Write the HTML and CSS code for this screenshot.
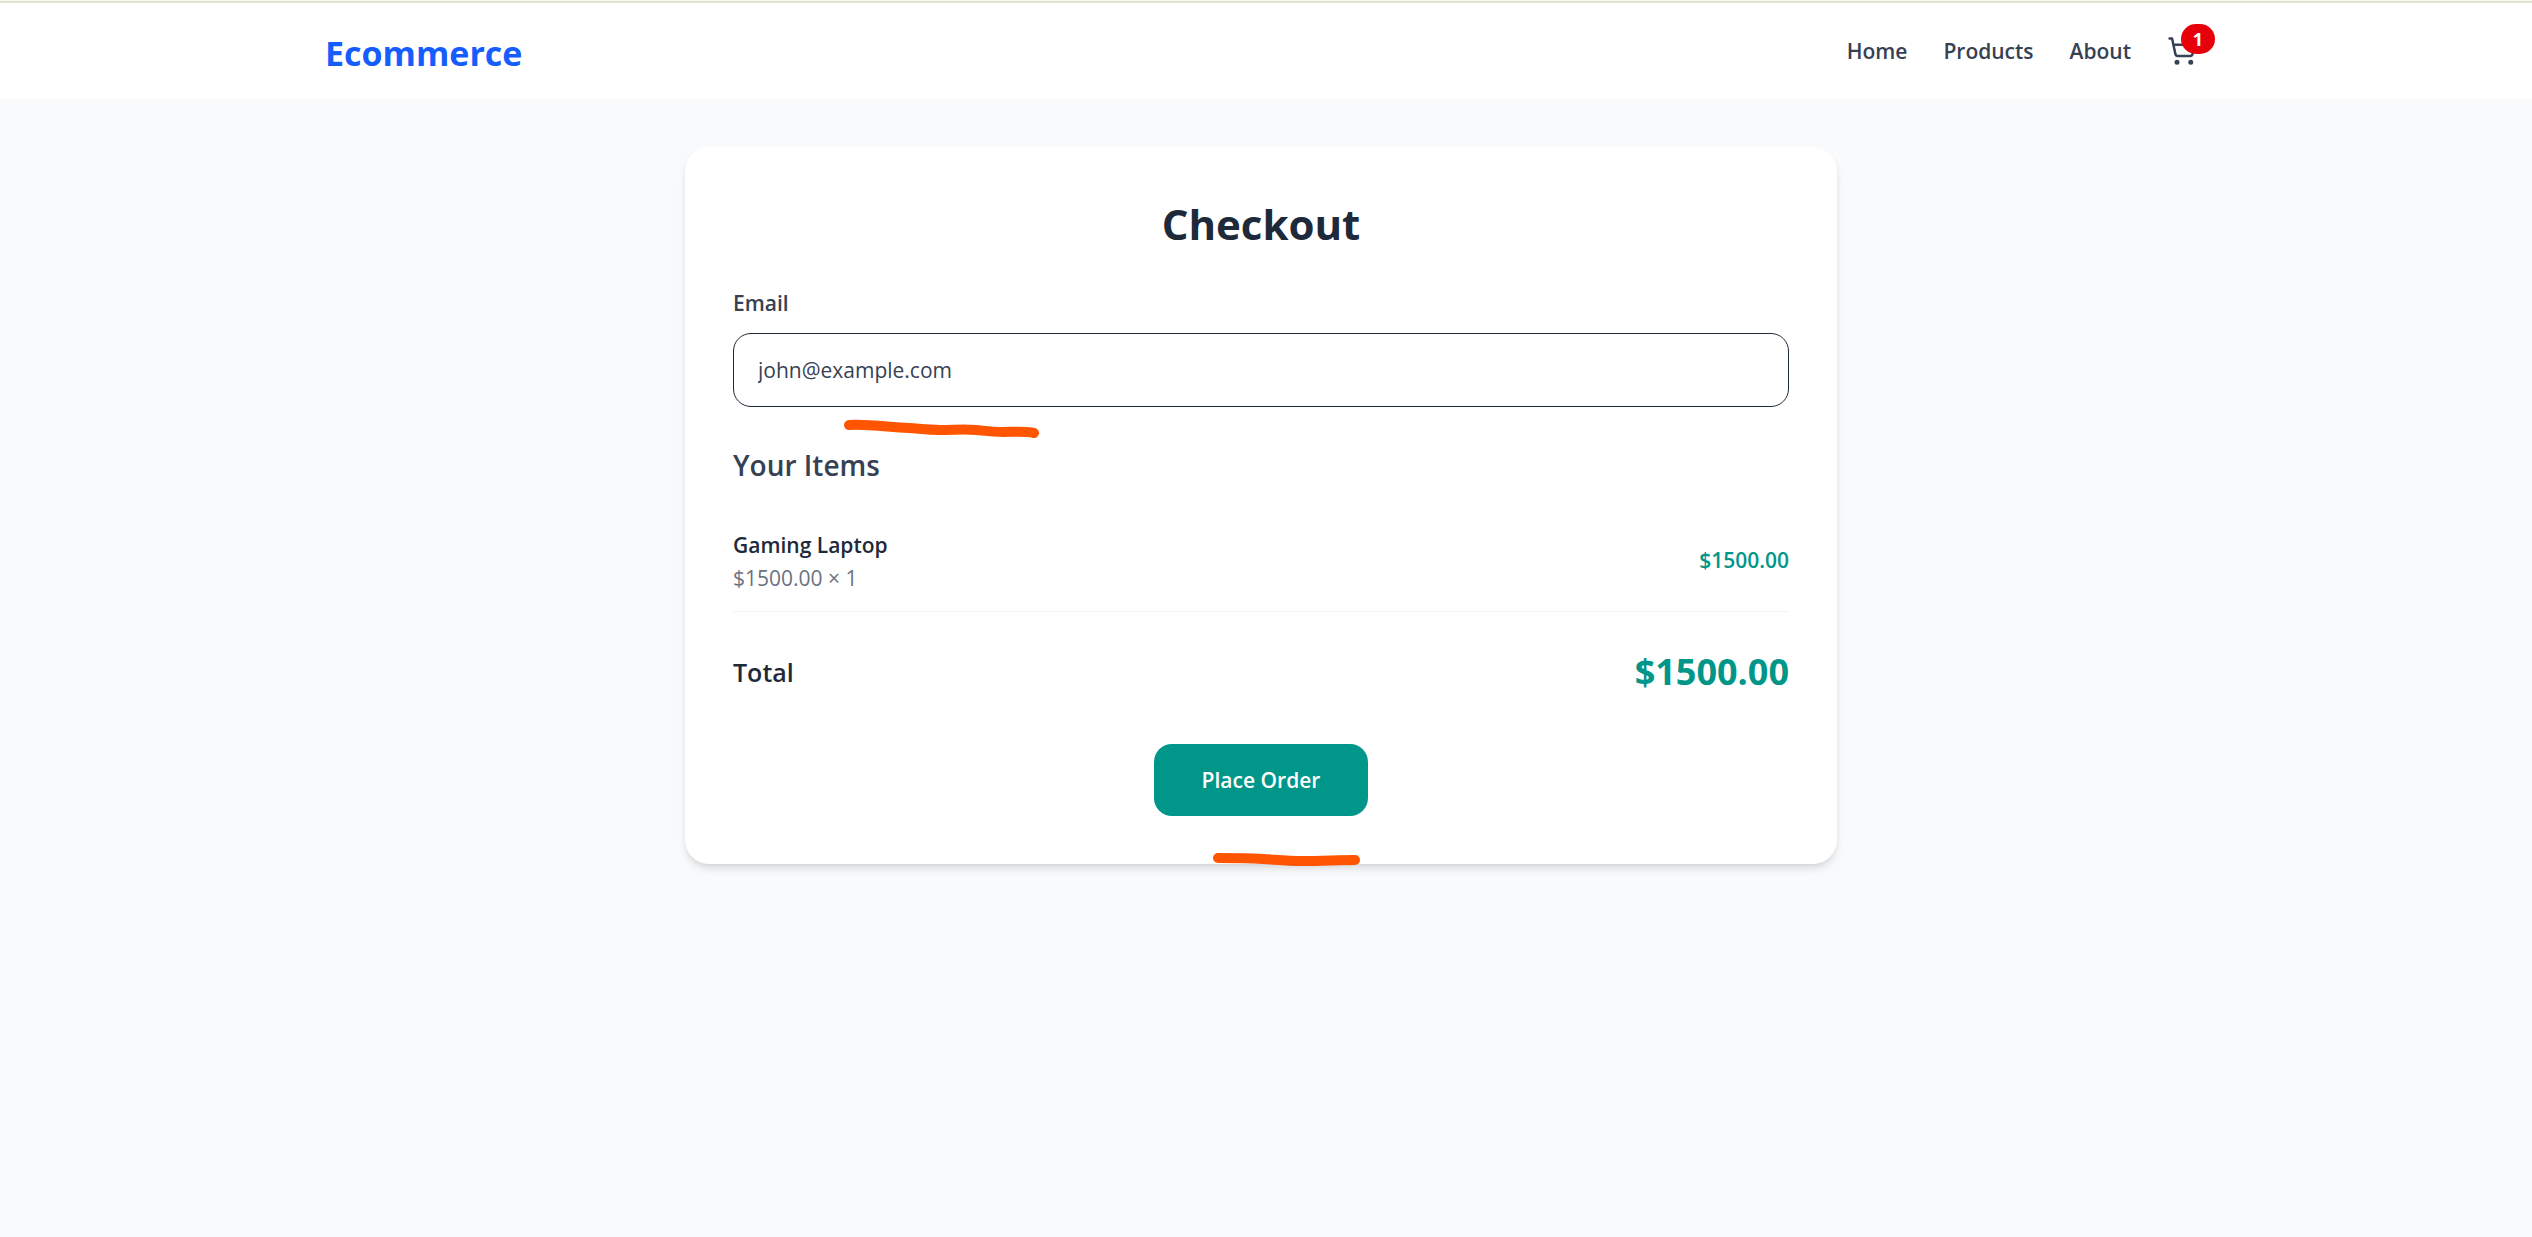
FILE: index.html
```html
<!DOCTYPE html>
<html lang="en">
<head>
<meta charset="utf-8">
<meta name="viewport" content="width=device-width, initial-scale=1">
<title>Checkout - Ecommerce</title>
<link rel="stylesheet" href="styles.css">
</head>
<body>
<header class="site-header">
  <div class="header-inner">
    <a class="brand" href="#">Ecommerce</a>
    <nav class="nav">
      <a href="#">Home</a>
      <a href="#">Products</a>
      <a href="#">About</a>
      <a class="cart" href="#" aria-label="Cart">
        <svg class="cart-icon" viewBox="0 0 24 24" fill="none" stroke="currentColor" stroke-width="2" stroke-linecap="round" stroke-linejoin="round" aria-hidden="true">
          <circle cx="8" cy="21" r="1"/>
          <circle cx="19" cy="21" r="1"/>
          <path d="M2.05 2.05h2l2.66 12.42a2 2 0 0 0 2 1.58h9.78a2 2 0 0 0 1.95-1.57l1.65-7.43H5.12"/>
        </svg>
        <span class="badge">1</span>
      </a>
    </nav>
  </div>
</header>
<main class="main">
  <section class="card">
    <h1 class="title">Checkout</h1>
    <form class="form">
      <div class="field">
        <label class="label" for="email">Email</label>
        <input class="input" id="email" type="email" placeholder="john@example.com">
      </div>
      <div class="items">
        <h2 class="subtitle">Your Items</h2>
        <div class="item">
          <div>
            <p class="item-name">Gaming Laptop</p>
            <p class="item-qty">$1500.00 × 1</p>
          </div>
          <p class="item-price">$1500.00</p>
        </div>
      </div>
      <div class="total">
        <span class="total-label">Total</span>
        <span class="total-price">$1500.00</span>
      </div>
      <button class="submit" type="button">Place Order</button>
    </form>
    <svg class="mark mark-email" viewBox="0 0 200 24" aria-hidden="true"><path d="M7 8C28 7 45 10 67 11C80 12 87 13 98 13C112 13 122 12 134 13C144 14 150 15 161 15C172 15 182 14 192 16"/></svg>
    <svg class="mark mark-submit" viewBox="0 0 152 20" aria-hidden="true"><path d="M7 7C22 7 35 7 52 8C68 9 76 10 92 10C110 10 128 9 144 9"/></svg>
  </section>
</main>
</body>
</html>
```

FILE: styles.css
```css
* {
  box-sizing: border-box;
}

body {
  margin: 0;
  min-height: 100vh;
  border-top: 1px solid #f7fbee;
  background: #f9fafb;
  color: #1e2939;
  font-family: "Segoe UI", "Open Sans", "Noto Sans", sans-serif;
  font-size: 21px;
  line-height: 36px;
}

h1, h2, p {
  margin: 0;
}

a {
  color: inherit;
  text-decoration: none;
}

.site-header {
  padding-right: 10px;
  border-top: 2px solid #dfe5d5;
  background: #fff;
}

.header-inner {
  display: flex;
  align-items: center;
  justify-content: space-between;
  max-width: 1920px;
  min-height: 96px;
  margin: 0 auto;
  padding: 0 24px;
}

.brand {
  padding-top: 4px;
  color: #155dfc;
  font-size: 34px;
  font-weight: 700;
}

.nav {
  display: flex;
  align-items: center;
  gap: 36px;
  color: #364153;
  font-weight: 600;
}

.cart {
  position: relative;
  display: flex;
}

.cart-icon {
  width: 30px;
  height: 30px;
}

.badge {
  position: absolute;
  top: -12px;
  right: -18px;
  padding: 0 12px;
  border-radius: 18px;
  background: #e7000b;
  color: #fff;
  font-size: 18px;
  font-weight: 700;
  line-height: 30px;
}

.main {
  padding: 48px 34px 48px 24px;
}

.card {
  position: relative;
  max-width: 1152px;
  margin: 0 auto;
  padding: 48px;
  border-radius: 24px;
  background: #fff;
  box-shadow: 0 6px 9px -1px rgba(0, 0, 0, 0.1), 0 3px 6px -3px rgba(0, 0, 0, 0.1);
}

.title {
  margin-bottom: 32px;
  font-size: 42px;
  font-weight: 700;
  line-height: 58px;
  text-align: center;
}

.form {
  display: flex;
  flex-direction: column;
  gap: 36px;
}

.field {
  display: flex;
  flex-direction: column;
  gap: 12px;
}

.label {
  color: #364153;
  font-weight: 600;
}

.input {
  width: 100%;
  height: 74px;
  padding: 0 24px;
  border: 1px solid #1e2939;
  border-radius: 18px;
  background: #fff;
  color: #364153;
  font: inherit;
}

.input::placeholder {
  color: #364153;
  opacity: 1;
}

.subtitle {
  margin-bottom: 22px;
  color: #364153;
  font-size: 28px;
  font-weight: 600;
  line-height: 44px;
}

.item {
  display: flex;
  align-items: center;
  justify-content: space-between;
  padding: 18px 0;
  border-bottom: 1px solid #f3f4f6;
}

.item-name {
  font-weight: 600;
}

.item-qty {
  color: #6a7282;
  line-height: 30px;
}

.item-price {
  color: #009689;
  font-weight: 600;
}

.total {
  display: flex;
  align-items: center;
  justify-content: space-between;
}

.total-label {
  font-size: 25px;
  font-weight: 600;
}

.total-price {
  color: #009689;
  font-size: 36px;
  font-weight: 700;
  line-height: 48px;
}

.submit {
  align-self: center;
  margin-top: 12px;
  padding: 18px 48px;
  border: 0;
  border-radius: 18px;
  background: #009689;
  color: #fff;
  font: inherit;
  font-weight: 600;
}

.mark {
  position: absolute;
  fill: none;
  stroke: #ff5500;
  stroke-width: 10;
  stroke-linecap: round;
}

.mark-email {
  top: 270px;
  left: 157px;
  width: 200px;
}

.mark-submit {
  top: 704px;
  left: 526px;
  width: 152px;
}
```
